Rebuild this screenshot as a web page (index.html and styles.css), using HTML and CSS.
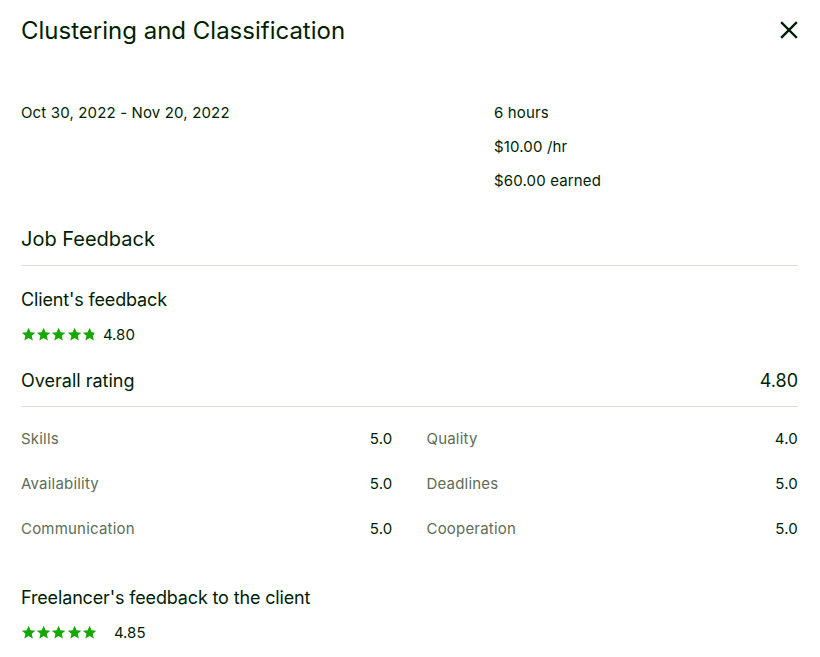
FILE: index.html
```html
<!DOCTYPE html>
<html>
<head>
<meta charset="utf-8">
<link rel="stylesheet" href="styles.css">
</head>
<body>
<div class="modal">
  <header class="head">
    <h1 class="title">Clustering and Classification</h1>
    <button class="close" aria-label="Close">
      <svg width="18" height="18" viewBox="0 0 18 18"><path d="M2 2L16 16M16 2L2 16" stroke="#001e00" stroke-width="2.4" stroke-linecap="square"/></svg>
    </button>
  </header>

  <section class="summary">
    <div class="dates">Oct 30, 2022 - Nov 20, 2022</div>
    <div class="stats">
      <div class="stat"><b>6</b> hours</div>
      <div class="stat"><b>$10.00</b> /hr</div>
      <div class="stat"><b>$60.00</b> earned</div>
    </div>
  </section>

  <h2 class="section-title">Job Feedback</h2>

  <div class="block">
    <h3 class="sub">Client's feedback</h3>
    <div class="stars-row">
      <span class="stars">
        <svg viewBox="0 0 16 16"><path d="M8 0.8l2.1 4.7 5.1.5-3.8 3.4 1.1 5-4.5-2.6-4.5 2.6 1.1-5L.8 6l5.1-.5z" fill="#14a800"/></svg>
        <svg viewBox="0 0 16 16"><path d="M8 0.8l2.1 4.7 5.1.5-3.8 3.4 1.1 5-4.5-2.6-4.5 2.6 1.1-5L.8 6l5.1-.5z" fill="#14a800"/></svg>
        <svg viewBox="0 0 16 16"><path d="M8 0.8l2.1 4.7 5.1.5-3.8 3.4 1.1 5-4.5-2.6-4.5 2.6 1.1-5L.8 6l5.1-.5z" fill="#14a800"/></svg>
        <svg viewBox="0 0 16 16"><path d="M8 0.8l2.1 4.7 5.1.5-3.8 3.4 1.1 5-4.5-2.6-4.5 2.6 1.1-5L.8 6l5.1-.5z" fill="#14a800"/></svg>
        <svg viewBox="0 0 16 16"><defs><linearGradient id="p80"><stop offset="80%" stop-color="#14a800"/><stop offset="80%" stop-color="#d5e0d5"/></linearGradient></defs><path d="M8 0.8l2.1 4.7 5.1.5-3.8 3.4 1.1 5-4.5-2.6-4.5 2.6 1.1-5L.8 6l5.1-.5z" fill="url(#p80)"/></svg>
      </span>
      <span class="score">4.80</span>
    </div>
  </div>

  <div class="overall">
    <span>Overall rating</span>
    <span>4.80</span>
  </div>

  <div class="ratings">
    <div class="rating"><span class="label">Skills</span><span class="val">5.0</span></div>
    <div class="rating"><span class="label">Quality</span><span class="val">4.0</span></div>
    <div class="rating"><span class="label">Availability</span><span class="val">5.0</span></div>
    <div class="rating"><span class="label">Deadlines</span><span class="val">5.0</span></div>
    <div class="rating"><span class="label">Communication</span><span class="val">5.0</span></div>
    <div class="rating"><span class="label">Cooperation</span><span class="val">5.0</span></div>
  </div>

  <div class="block freelancer">
    <h3 class="sub">Freelancer's feedback to the client</h3>
    <div class="stars-row">
      <span class="stars">
        <svg viewBox="0 0 16 16"><path d="M8 0.8l2.1 4.7 5.1.5-3.8 3.4 1.1 5-4.5-2.6-4.5 2.6 1.1-5L.8 6l5.1-.5z" fill="#14a800"/></svg>
        <svg viewBox="0 0 16 16"><path d="M8 0.8l2.1 4.7 5.1.5-3.8 3.4 1.1 5-4.5-2.6-4.5 2.6 1.1-5L.8 6l5.1-.5z" fill="#14a800"/></svg>
        <svg viewBox="0 0 16 16"><path d="M8 0.8l2.1 4.7 5.1.5-3.8 3.4 1.1 5-4.5-2.6-4.5 2.6 1.1-5L.8 6l5.1-.5z" fill="#14a800"/></svg>
        <svg viewBox="0 0 16 16"><path d="M8 0.8l2.1 4.7 5.1.5-3.8 3.4 1.1 5-4.5-2.6-4.5 2.6 1.1-5L.8 6l5.1-.5z" fill="#14a800"/></svg>
        <svg viewBox="0 0 16 16"><path d="M8 0.8l2.1 4.7 5.1.5-3.8 3.4 1.1 5-4.5-2.6-4.5 2.6 1.1-5L.8 6l5.1-.5z" fill="#14a800"/></svg>
      </span>
      <span class="score wide">4.85</span>
    </div>
  </div>
</div>
</body>
</html>
```
FILE: styles.css
```css
* { box-sizing: border-box; }
html, body { margin: 0; padding: 0; background: #fff; }
body {
  font-family: Inter, "Liberation Sans", Arial, sans-serif;
  color: #001e00;
}
.modal {
  width: 820px;
  padding: 0 22px 0 21px;
}
.head {
  display: flex;
  justify-content: space-between;
  align-items: center;
  height: 60px;
}
.title {
  margin: 0;
  font-size: 24px;
  font-weight: 400;
}
.close {
  border: 0;
  background: none;
  padding: 0;
  width: 18px;
  height: 18px;
  display: flex;
}
.summary {
  display: grid;
  grid-template-columns: 473px 1fr;
  padding-top: 43px;
}
.dates, .stat {
  font-size: 15px;
  line-height: 20px;
  letter-spacing: 0.15px;
}
.stats {
  display: flex;
  flex-direction: column;
  gap: 14px;
}
.stat b { font-weight: 400; }
.section-title {
  margin: 35px 0 0;
  font-size: 20px;
  font-weight: 400;
  line-height: 26px;
  padding-bottom: 13px;
  border-bottom: 1px solid #d5e0d5;
}
.block { padding-top: 22px; }
.sub {
  margin: 0;
  font-size: 18px;
  font-weight: 400;
  line-height: 24px;
  letter-spacing: -0.15px;
}
.stars-row {
  display: flex;
  align-items: center;
  margin-top: 12px;
  height: 20px;
}
.stars { display: flex; }
.stars svg { width: 15.2px; height: 15px; display: block; }
.score { font-size: 15px; margin-left: 6px; }
.score.wide { margin-left: 17px; }
.overall {
  display: flex;
  justify-content: space-between;
  font-size: 18px;
  line-height: 24px;
  padding-top: 25px;
  padding-bottom: 13px;
  border-bottom: 1px solid #d5e0d5;
}
.ratings {
  display: grid;
  grid-template-columns: 1fr 1fr;
  column-gap: 34px;
  row-gap: 25px;
  padding-top: 22px;
}
.rating {
  display: flex;
  justify-content: space-between;
  font-size: 15px;
  line-height: 20px;
  letter-spacing: 0.2px;
}
.label { color: #5e6d55; }
.val { color: #001e00; }
.freelancer { padding-top: 47px; }
```
